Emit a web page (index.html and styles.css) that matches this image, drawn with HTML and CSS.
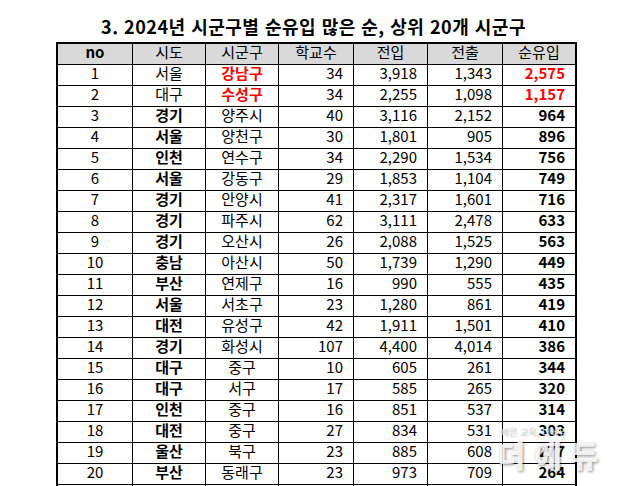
FILE: index.html
```html
<!DOCTYPE html>
<html lang="ko">
<head>
<meta charset="utf-8">
<title>2024년 시군구별 순유입</title>
<link rel="stylesheet" href="styles.css">
</head>
<body>
<div class="page">
  <h1 class="title">3. 2024년 시군구별 순유입 많은 순, 상위 20개 시군구</h1>
  <table class="data">
    <colgroup>
      <col class="c1"><col class="c2"><col class="c3"><col class="c4"><col class="c5"><col class="c6"><col class="c7">
    </colgroup>
    <thead>
      <tr><th class="b">no</th><th>시도</th><th>시군구</th><th>학교수</th><th>전입</th><th>전출</th><th>순유입</th></tr>
    </thead>
    <tbody>
      <tr><td>1</td><td>서울</td><td class="red b">강남구</td><td class="n">34</td><td class="n">3,918</td><td class="n">1,343</td><td class="n b red">2,575</td></tr>
      <tr><td>2</td><td>대구</td><td class="red b">수성구</td><td class="n">34</td><td class="n">2,255</td><td class="n">1,098</td><td class="n b red">1,157</td></tr>
      <tr><td>3</td><td class="b">경기</td><td>양주시</td><td class="n">40</td><td class="n">3,116</td><td class="n">2,152</td><td class="n b">964</td></tr>
      <tr><td>4</td><td class="b">서울</td><td>양천구</td><td class="n">30</td><td class="n">1,801</td><td class="n">905</td><td class="n b">896</td></tr>
      <tr><td>5</td><td class="b">인천</td><td>연수구</td><td class="n">34</td><td class="n">2,290</td><td class="n">1,534</td><td class="n b">756</td></tr>
      <tr><td>6</td><td class="b">서울</td><td>강동구</td><td class="n">29</td><td class="n">1,853</td><td class="n">1,104</td><td class="n b">749</td></tr>
      <tr><td>7</td><td class="b">경기</td><td>안양시</td><td class="n">41</td><td class="n">2,317</td><td class="n">1,601</td><td class="n b">716</td></tr>
      <tr><td>8</td><td class="b">경기</td><td>파주시</td><td class="n">62</td><td class="n">3,111</td><td class="n">2,478</td><td class="n b">633</td></tr>
      <tr><td>9</td><td class="b">경기</td><td>오산시</td><td class="n">26</td><td class="n">2,088</td><td class="n">1,525</td><td class="n b">563</td></tr>
      <tr><td>10</td><td class="b">충남</td><td>아산시</td><td class="n">50</td><td class="n">1,739</td><td class="n">1,290</td><td class="n b">449</td></tr>
      <tr><td>11</td><td class="b">부산</td><td>연제구</td><td class="n">16</td><td class="n">990</td><td class="n">555</td><td class="n b">435</td></tr>
      <tr><td>12</td><td class="b">서울</td><td>서초구</td><td class="n">23</td><td class="n">1,280</td><td class="n">861</td><td class="n b">419</td></tr>
      <tr><td>13</td><td class="b">대전</td><td>유성구</td><td class="n">42</td><td class="n">1,911</td><td class="n">1,501</td><td class="n b">410</td></tr>
      <tr><td>14</td><td class="b">경기</td><td>화성시</td><td class="n">107</td><td class="n">4,400</td><td class="n">4,014</td><td class="n b">386</td></tr>
      <tr><td>15</td><td class="b">대구</td><td>중구</td><td class="n">10</td><td class="n">605</td><td class="n">261</td><td class="n b">344</td></tr>
      <tr><td>16</td><td class="b">대구</td><td>서구</td><td class="n">17</td><td class="n">585</td><td class="n">265</td><td class="n b">320</td></tr>
      <tr><td>17</td><td class="b">인천</td><td>중구</td><td class="n">16</td><td class="n">851</td><td class="n">537</td><td class="n b">314</td></tr>
      <tr><td>18</td><td class="b">대전</td><td>중구</td><td class="n">27</td><td class="n">834</td><td class="n">531</td><td class="n b">303</td></tr>
      <tr><td>19</td><td class="b">울산</td><td>북구</td><td class="n">23</td><td class="n">885</td><td class="n">608</td><td class="n b">277</td></tr>
      <tr><td>20</td><td class="b">부산</td><td>동래구</td><td class="n">23</td><td class="n">973</td><td class="n">709</td><td class="n b">264</td></tr>
      <tr class="spacer"><td></td><td></td><td></td><td></td><td></td><td></td><td></td></tr>
    </tbody>
  </table>
  <div class="watermark">
    <span class="wm-small">바른 교육, 더에듀</span>
    <span class="wm-big">더에듀</span>
  </div>
</div>
</body>
</html>
```

FILE: styles.css
```css
html, body {
  margin: 0;
  padding: 0;
  background: #ffffff;
  overflow: hidden;
}

.page {
  position: relative;
  width: 627px;
  height: 486px;
  overflow: hidden;
  font-family: "Noto Sans CJK KR", "Noto Sans", sans-serif;
  color: #000;
}

.title {
  margin: 0;
  box-sizing: border-box;
  height: 42px;
  padding: 14px 0 0 0;
  font-size: 18px;
  line-height: 24px;
  font-weight: 700;
  text-align: center;
  letter-spacing: 0.5px;
}

.data {
  margin-left: 56px;
  border-collapse: separate;
  border-spacing: 0;
  border: 2px solid #000;
  border-bottom: none;
  table-layout: fixed;
  width: 521px;
  font-size: 15px;
}

.c1 { width: 75px; }
.c2 { width: 73px; }
.c3 { width: 73px; }
.c4 { width: 75px; }
.c5 { width: 74px; }
.c6 { width: 75px; }
.c7 { width: 72px; }

.data th,
.data td {
  box-sizing: border-box;
  height: 21px;
  border-right: 1px solid #000;
  border-bottom: 1px solid #000;
  padding: 0 10px 5px 10px;
  line-height: 15px;
  vertical-align: top;
  text-align: center;
  font-weight: 400;
  white-space: nowrap;
}

.data th:last-child,
.data td:last-child {
  border-right: none;
}

.data th {
  background: #d9d9d9;
}

.data .n { text-align: right; }
.data .b { font-weight: 700; }
.data .red { color: #ff0000; }

.watermark {
  position: absolute;
  left: 484px;
  top: 427px;
  width: 128px;
  display: flex;
  flex-direction: column;
  align-items: center;
  pointer-events: none;
}

.wm-small {
  font-size: 9px;
  line-height: 11px;
  color: rgba(255, 255, 255, 0.9);
  text-shadow: 0 0 1px rgba(0, 0, 0, 0.5);
  margin-left: -28px;
}

.wm-big {
  font-size: 30px;
  line-height: 32px;
  font-weight: 900;
  letter-spacing: 9px;
  margin-right: -9px;
  color: rgba(255, 255, 255, 0.85);
  text-shadow: 1px 1px 3px rgba(0, 0, 0, 0.45);
}
```
